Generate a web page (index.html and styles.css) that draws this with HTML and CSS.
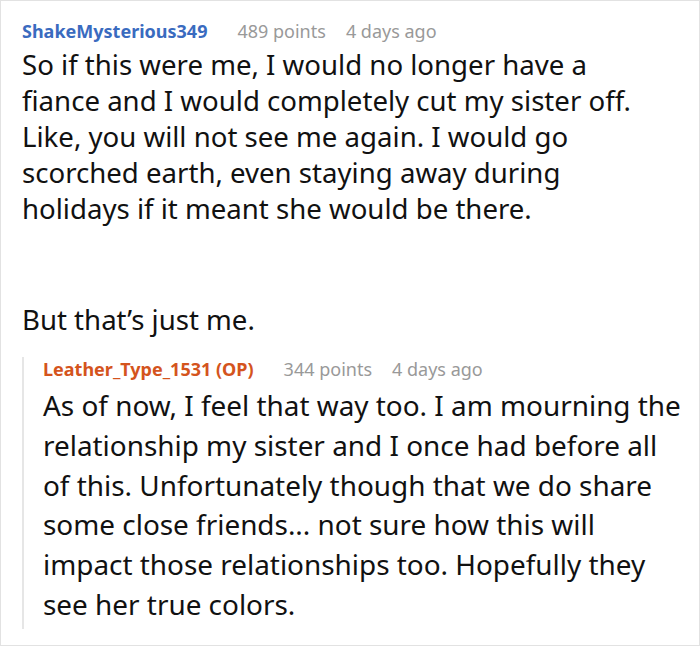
FILE: index.html
```html
<!DOCTYPE html>
<html>
<head>
<meta charset="utf-8">
<link rel="stylesheet" href="styles.css">
</head>
<body>
<div class="thread">
  <div class="comment">
    <div class="meta">
      <span class="user">ShakeMysterious349</span>
      <span class="info">489 points</span>
      <span class="info">4 days ago</span>
    </div>
    <div class="body main-body">
      <p>So if this were me, I would no longer have a fiance and I would completely cut my sister off. Like, you will not see me again. I would go scorched earth, even staying away during holidays if it meant she would be there.</p>
      <p>But that’s just me.</p>
    </div>
    <div class="reply">
      <div class="meta reply-meta">
        <span class="user op">Leather_Type_1531 (OP)</span>
        <span class="info">344 points</span>
        <span class="info">4 days ago</span>
      </div>
      <div class="body reply-body">
        <p>As of now, I feel that way too. I am mourning the relationship my sister and I once had before all of this. Unfortunately though that we do share some close friends... not sure how this will impact those relationships too. Hopefully they see her true colors.</p>
      </div>
    </div>
  </div>
</div>
</body>
</html>
```

FILE: styles.css
```css
html, body {
  margin: 0;
  padding: 0;
  background: #fff;
}
body {
  font-family: "Noto Sans", "Open Sans", sans-serif;
  color: #111;
}
.thread {
  width: 698px;
  height: 644px;
  border: 1px solid #e2e2e2;
  overflow: hidden;
}
.comment {
  padding: 18px 12px 0 21px;
}
.meta {
  display: flex;
  align-items: baseline;
  gap: 20px;
  font-size: 18px;
  line-height: 24px;
}
.user {
  font-weight: 700;
  color: #3a6bbf;
  margin-right: 10px;
}
.user.op {
  color: #d4541d;
}
.info {
  color: #999;
}
.body {
  font-size: 27.6px;
  line-height: 36px;
}
.main-body {
  margin-top: 3px;
  padding-right: 30px;
}
.body p {
  margin: 0 0 75px 0;
}
.body p:last-child {
  margin-bottom: 0;
}
.reply {
  margin-top: 32px;
  border-left: 2px solid #e6e6e6;
  padding: 0 0 4px 19px;
}
.reply-meta {
  margin-top: -12px;
}
.reply-body {
  font-size: 27.9px;
  line-height: 39.8px;
  margin-top: 5px;
}
```
